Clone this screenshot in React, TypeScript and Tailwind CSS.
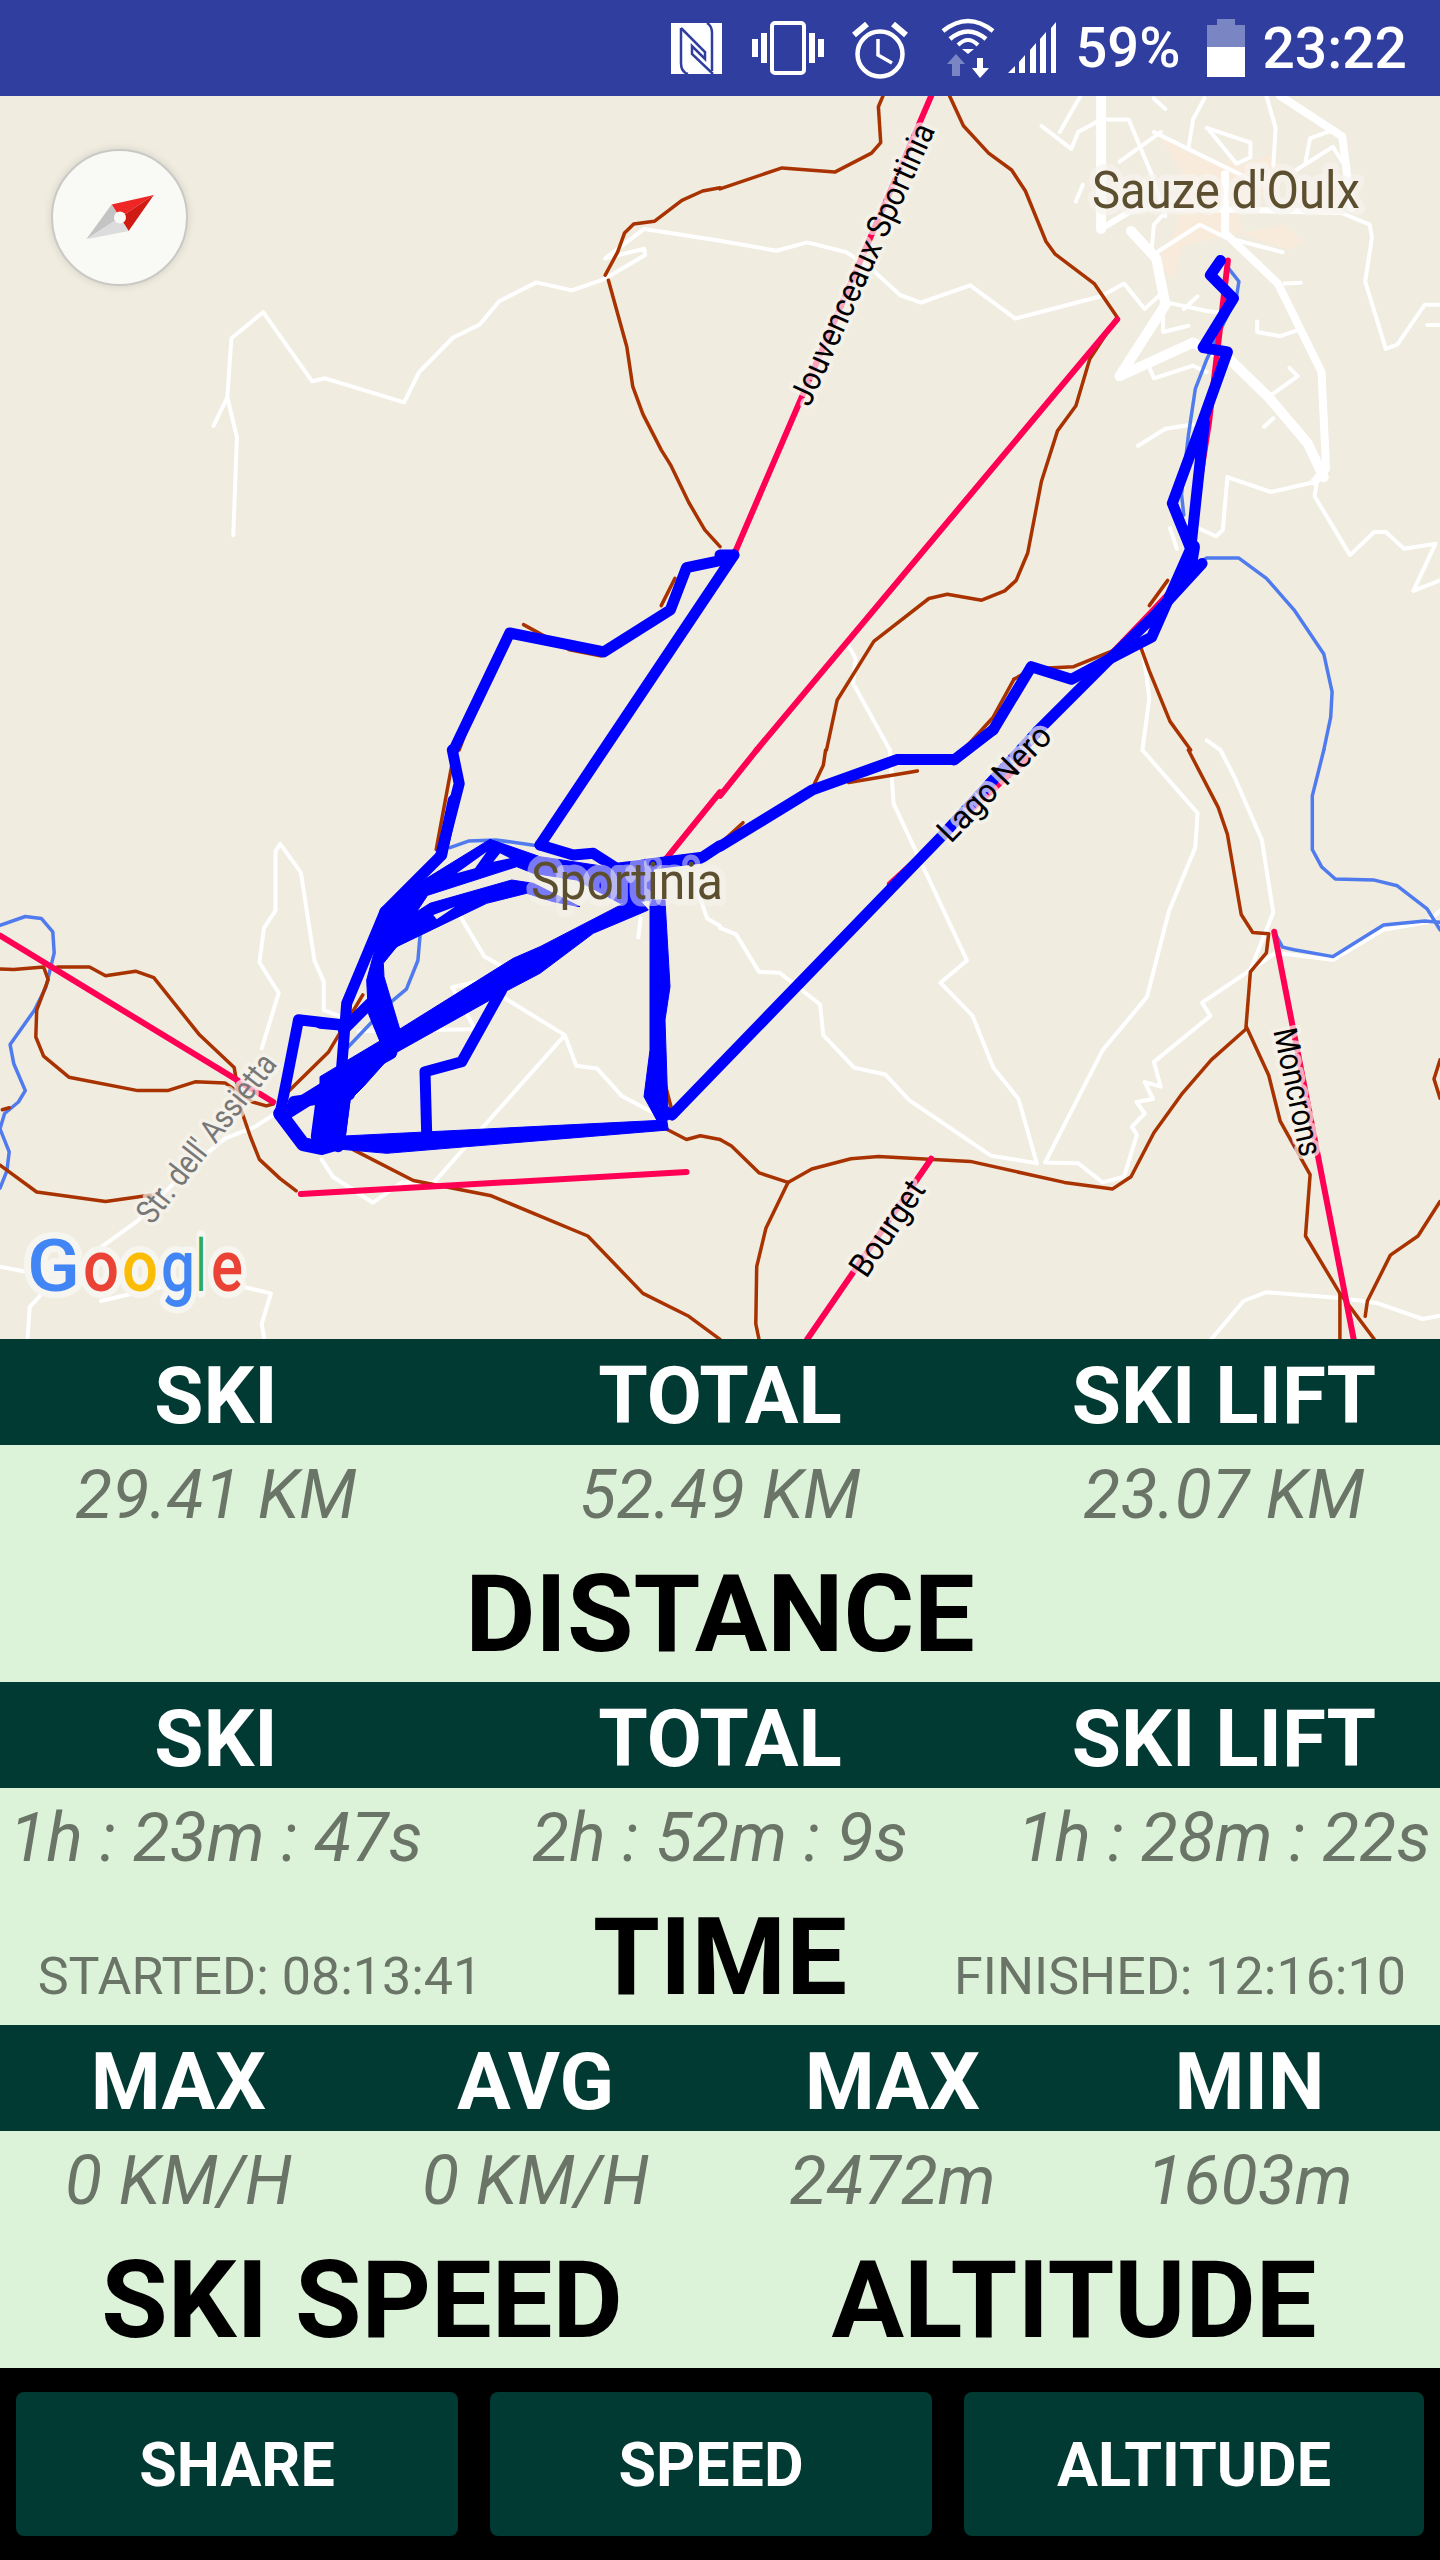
import React from "react";

type Zone = 2 | 3 | 4 | 5 | 6 | 9;
const Z: Record<Zone, [number, number, number, number]> = {
  2: [0, 90, 720 / 1568, 660 / 1568],
  3: [720, 90, 720 / 1568, 660 / 1568],
  4: [0, 750, 720 / 1568, 600 / 1568],
  5: [720, 750, 720 / 1568, 600 / 1568],
  6: [320, 800, 1 / 3, 1 / 3],
  9: [0, 0, 1, 1],
};
const pts = (z: Zone, s: string) => {
  const [ox, oy, sx, sy] = Z[z];
  return s
    .trim()
    .split(/\s+/)
    .map((p) => {
      const [x, y] = p.split(",").map(Number);
      return `${(ox + x * sx).toFixed(1)},${(oy + y * sy).toFixed(1)}`;
    })
    .join(" ");
};

type L = [Zone, string, number?];

const white: L[] = [
  [2, "508,1058 516,825 495,730 504,590 573,528 680,692 708,685 880,742 913,670 987,588 1045,557 1087,502 1168,457 1245,476 1315,450 1405,392 1403,377 1318,400 1403,330 1568,358"],
  [2, "495,730 465,798"],
  [3, "0,358 123,382 190,362 275,385 330,425 392,487 437,505 545,464 643,543 830,490 880,460 925,520 965,480"],
  [3, "830,14 830,330", 10],
  [3, "1220,14 1355,110 1375,280", 8],
  [3, "895,335 950,400 970,510 870,680 1030,600 1110,640 1195,730 1280,840 1315,920", 10],
  [3, "1100,200 1100,340 1215,460 1310,670 1320,900 1295,930", 8],
  [3, "830,330 890,290 930,280 1350,290", 6],
  [3, "700,85 765,140 780,100 830,70 890,70 940,200 970,300"],
  [3, "740,100 785,14"],
  [3, "1020,140 1030,70 1055,20"],
  [3, "1060,90 1155,125 1155,160 1125,175 1065,95"],
  [3, "1190,14 1210,90 1205,180"],
  [3, "1275,170 1285,115 1335,95"],
  [3, "1255,190 1335,135 1355,170"],
  [3, "945,100 1150,210"],
  [3, "945,390 1045,320 1100,350 1225,385"],
  [3, "940,380 945,320 970,290"],
  [3, "870,170 960,100"],
  [3, "945,20 970,45"],
  [3, "1350,290 1415,320 1420,350 1405,455 1450,615 1475,605 1535,510 1568,510"],
  [3, "1540,558 1568,558"],
  [3, "975,505 1060,525 1095,530"],
  [3, "1010,520 1040,490"],
  [3, "965,530 965,575 1020,560"],
  [3, "1170,550 1170,575 1220,585 1260,570"],
  [3, "935,660 945,685 1030,655 1060,670"],
  [3, "1240,660 1258,680 1200,725"],
  [3, "1185,800 1205,780"],
  [3, "910,845 970,805 1030,795"],
  [3, "980,1040 995,1090"],
  [3, "1105,920 1200,955 1300,930 1295,965 1372,1105 1425,1050 1450,1050 1490,1090 1558,1078 1510,1190 1568,1165"],
  [3, "1105,920 1095,1045 1080,1060 1020,1030"],
  [3, "1230,460 1265,458"],
  [3, "920,1568 935,1445 920,1320"],
  [3, "1060,1545 1090,1568"],
  [3, "280,1320 295,1350 290,1410 370,1568"],
  [3, "775,265 790,225"],
  [5, "370,0 378,140 538,550 480,608 550,695 595,830 650,912 690,1080"],
  [5, "920,0 1040,165 1035,255 978,420 930,645 833,785 708,1078 780,1080 833,1130 880,1115 908,1005 897,985 925,950 907,920 943,912 925,868 960,880 945,815 1068,695 1050,660 1155,575 1205,425 1180,235 1120,70 1090,0"],
  [5, "1155,575 1210,530 1335,548 1445,470 1540,450 1568,420"],
  [5, "0,465 35,482 85,580 130,582 218,665 225,745 292,830 360,848 412,915 590,1060 690,1080"],
  [5, "1070,1540 1140,1440 1190,1417 1350,1432 1430,1445 1530,1487 1568,1478"],
  [4, "750,700 705,680 705,605 685,550 655,320 610,245 600,265 600,420 575,465 565,555 607,635 570,780"],
  [4, "600,950 555,985 490,1015 415,1090"],
  [4, "380,1130 300,1230 185,1330"],
  [4, "0,1350 50,1362 110,1362"],
  [4, "700,1070 725,1115 812,1183 875,1130 945,1130 1230,745 1255,825 1300,832 1355,905 1450,965"],
  [4, "985,620 1040,605 1230,745"],
  [4, "985,620 1030,720 1030,730 780,735"],
  [4, "1000,430 1055,540 1130,590"],
  [4, "60,1535 65,1455 100,1410"],
  [4, "220,1440 360,1400"],
  [4, "520,1400 590,1420 570,1500 575,1535"],
  [4, "1395,440 1390,490"],
  [4, "1520,370 1540,440 1568,460"],
];

const brown: L[] = [
  [2, "1568,232 1530,240 1485,262 1425,312 1380,318 1360,340 1345,385 1318,440"],
  [2, "1325,452 1365,610 1378,705 1400,770 1440,855 1460,890 1500,980 1535,1045 1568,1085"],
  [2, "1140,1270 1240,1330 1310,1345"],
  [2, "1440,1225 1470,1160"],
  [2, "1000,1568 1030,1480"],
  [3, "0,235 135,185 250,195 330,150 350,125 345,40 355,14"],
  [3, "500,14 530,85 585,150 635,190 665,240 710,360 730,390 815,460 865,540 805,640 775,750 735,810 700,930 670,1100 645,1165 620,1190 570,1212 495,1198 455,1208 335,1310 255,1450 232,1568"],
  [3, "915,1320 935,1380 980,1500 1025,1568"],
  [3, "935,1225 975,1165"],
  [3, "640,1400 595,1490 530,1568"],
  [3, "640,1400 680,1375 770,1370 860,1330"],
  [5, "230,0 225,40 205,90"],
  [5, "280,85 430,55"],
  [5, "50,190 0,245"],
  [5, "0,1018 25,1035 85,1105 148,1130 200,1095 285,1068 345,1062 545,1075 750,1130 855,1147 895,1115 945,1000 1005,900 1070,810 1145,730 1155,580 1190,530 1195,480 1160,477 1135,430 1105,220 1085,150 1020,0"],
  [5, "148,1130 100,1250 80,1350 78,1500 85,1540"],
  [5, "1147,725 1195,850 1220,970 1285,1110 1275,1270 1350,1420 1350,1540"],
  [5, "1350,1420 1425,1540"],
  [5, "1405,1480 1410,1440 1460,1320 1520,1270 1568,1180"],
  [5, "1568,810 1555,860 1568,910"],
  [4, "0,572 30,574 95,567 105,600 80,680 78,750 95,800 150,855 300,890 365,890 425,867 490,870 550,920 580,930 595,925"],
  [4, "125,567 195,567 230,590 295,578 335,595 435,745 510,830 525,940 545,1010 565,1070 610,1120 645,1152"],
  [4, "0,1085 80,1155 230,1180 345,1160"],
  [4, "630,890 715,790 790,640"],
  [4, "950,260 990,0"],
  [4, "770,1045 900,1125 1070,1165 1280,1270 1400,1420 1500,1480 1568,1540"],
  [4, "1450,990 1495,1018 1525,1008 1568,1018"],
  [4, "5,940 20,935"],
  [4, "1450,880 1465,950"],
];

const river: L[] = [
  [3, "1105,420 1130,455 1125,490 1090,570 1060,640 1035,710 1020,820 1005,960 1010,1010"],
  [3, "1040,1125 1060,1112 1130,1112 1190,1160 1250,1235 1315,1340 1333,1430 1330,1490 1315,1568"],
  [5, "1315,0 1290,120 1290,260 1310,305 1340,337 1425,340 1475,355 1540,415 1568,470"],
  [5, "1568,450 1535,447 1445,457 1335,540 1250,522 1225,515 1207,475"],
  [4, "0,458 55,435 90,440 115,475 118,530 100,620 75,680 22,770 30,820 55,890 40,920 10,950 0,990 20,1050 15,1100 0,1145"],
  [4, "980,255 1020,238 1080,235 1170,250"],
  [4, "915,480 910,550 885,625 850,660 755,780"],
];

const pink: L[] = [
  [3, "460,14 30,1105"],
  [3, "865,545 80,1568"],
  [5, "80,0 0,120"],
  [4, "1568,110 1450,285"],
  [3, "1106,405 1065,790 1012,1155 940,1240 690,1525"],
  [5, "680,10 370,350"],
  [4, "0,485 595,920"],
  [4, "655,1160 1495,1103"],
  [5, "460,1068 190,1540"],
  [5, "1207,475 1380,1540"],
];

const track: L[] = [
  [3, "1090,405 1068,440 1118,495 1052,612 1105,622 1050,790 985,982 1025,1090 1055,790"],
  [3, "1025,1090 940,1300 860,1345 765,1400 678,1370 595,1520"],
  [9, "993.3,729.6 954,760"],
  [5, "510,25 385,25 200,105 0,252"],
  [9, "1037,732 942,836 672,1115 663,1110"],
  [3, "1050,1125 945,1250 855,1345 690,1525"],
  [3, "1030,1085 1020,1150", 14],
  [4, "1568,250 1530,280 1400,300"],
  [2, "988,1568 1110,1290 1315,1335 1460,1235 1495,1135 1568,1118"],
  [9, "734,555 540,845"],
  [3, "0,1105 30,1105"],
  [4, "985,0 1000,88 960,275"],
  [6, "400,0 365,165 195,335"],
  [6, "660,135 760,165 820,160 890,205 1140,175"],
  [6, "195,335 80,610 65,800 55,1040"],
  [6, "545,570 425,785 315,815 320,1000"],
  [6, "0,670 60,675"],
  [6, "70,690 150,610"],
  [4, "610,950 650,705 745,718"],
  [4, "610,950 660,1030 700,1040 730,1030", 14],
  [4, "640,920 760,900", 12],
  [4, "700,920 690,1010", 12],
  [4, "620,950 700,890 850,790", 14],
  [4, "750,900 735,1030", 14],
];

const trackFill: [Zone, string][] = [
  [6, "0,830 235,690 580,475 660,440 950,290 985,330 950,345 820,400 660,520 555,575 215,765 130,860 90,900 75,1020 0,1030"],
  [6, "990,300 1035,300 1050,560 1035,660 1045,960 1010,960 972,890 990,750"],
  [6, "30,1010 1040,960 1045,990 200,1060 30,1045"],
  [6, "195,335 320,235 320,290 280,350 300,390 230,440 190,490 192,530 240,690 180,725 145,640 140,540"],
  [6, "320,235 510,118 660,170 760,185 890,205 1000,190 1000,300 900,310 770,240 640,220 590,200 310,290"],
  [6, "330,310 575,240 640,250 780,320 700,305 620,280 500,310 230,440 200,470 190,400"],
];

const holes: string[] = ["410,220 500,155 465,205", "520,185 540,160 570,175", "340,345 405,320 350,358"];

const Lines = ({ data, color, w }: { data: L[]; color: string; w: number }) => (
  <>
    {data.map(([z, s, lw], i) => (
      <polyline key={i} points={pts(z, s)} fill="none" stroke={color} strokeWidth={lw ?? w} strokeLinejoin="round" strokeLinecap="round" />
    ))}
  </>
);

const Label = ({ x, y, r, len, size, children, color = "#000", halo = "#f6f4ee", hw = 8, op = 0.7 }: { x: number; y: number; r: number; len: number; size: number; children: string; color?: string; halo?: string; hw?: number; op?: number }) => (
  <text
    transform={`translate(${x} ${y}) rotate(${r})`}
    textAnchor="middle"
    dominantBaseline="central"
    fontSize={size}
    textLength={len}
    lengthAdjust="spacingAndGlyphs"
    fill={color}
    stroke={halo}
    strokeWidth={hw}
    strokeOpacity={op}
    strokeLinejoin="round"
    paintOrder="stroke"
    fontFamily="Roboto, sans-serif"
  >
    {children}
  </text>
);

const googleLetters: [string, string, number, number][] = [
  ["G", "#4285f4", 27, 53],
  ["o", "#ea4335", 83, 36],
  ["o", "#fbbc05", 122, 36],
  ["g", "#4285f4", 161, 34],
  ["l", "#34a853", 197, 8],
  ["e", "#ea4335", 211, 32],
];

const MapView = () => (
  <div className="relative h-[1243px] overflow-hidden bg-[#f0ece0]">
    <svg viewBox="0 96 1440 1243" width={1440} height={1243} className="block">
      <polygon fill="#f9ebdc" points={pts(3, "950,100 1020,150 1100,185 1110,155 1130,180 1195,155 1230,185 1210,240 1120,280 1140,340 1230,320 1270,360 1240,380 1130,340 1090,350 1010,370 985,450 950,400 990,340 1000,290 1010,200")} />
      <Lines data={white} color="#ffffff" w={4} />
      <Lines data={river} color="#4f7bee" w={3.5} />
      <Lines data={brown} color="#a83200" w={3.5} />
      <Lines data={pink} color="#ff0055" w={6} />
      <Lines data={track} color="#0000ff" w={11} />
      {trackFill.map(([z, s], i) => (
        <polygon key={i} points={pts(z, s)} fill="#0000ff" stroke="#0000ff" strokeWidth={1} strokeLinejoin="round" />
      ))}
      {holes.map((s, i) => (
        <polygon key={i} points={pts(6, s)} fill="#f0ece0" />
      ))}
      <Label x={862} y={264} r={-65.6} len={305} size={33}>Jouvenceaux Sportinia</Label>
      <Label x={994} y={783} r={-46} len={148} size={33}>Lago Nero</Label>
      <Label x={887} y={1228} r={-56} len={108} size={33}>Bourget</Label>
      <Label x={1298} y={1092} r={78} len={130} size={33}>Moncrons</Label>
      <Label x={206} y={1138} r={-52} len={205} size={33} color="#777777">Str. dell' Assietta</Label>
      <Label x={1226} y={190} r={0} len={268} size={52} color="#5c4f2f" hw={13}>Sauze d'Oulx</Label>
      <Label x={627} y={881} r={0} len={192} size={52} color="#5c4f2f" hw={14} op={0.5}>Sportinia</Label>
      <text y={1291} fontSize={72} fontWeight={500} stroke="#f6f5ef" strokeWidth={13} strokeLinejoin="round" paintOrder="stroke" fontFamily="Roboto, sans-serif">
        {googleLetters.map(([c, f, x, w], i) => (
          <tspan key={i} x={x} fill={f} textLength={w} lengthAdjust="spacingAndGlyphs">
            {c}
          </tspan>
        ))}
      </text>
    </svg>
    <div className="absolute left-[51px] top-[53px] flex h-[137px] w-[137px] items-center justify-center rounded-full border-2 border-[#c9c9c5] bg-[#f9f9f5] shadow-[0_0_8px_rgba(0,0,0,0.12)]">
      <svg viewBox="86 193 68 45" width={68} height={45}>
        <polygon points="111.6,202.4 153.8,193 120,215.4" fill="#ee2626" />
        <polygon points="153.8,193 128.6,229 120,215.4" fill="#d01a14" />
        <polygon points="111.6,202.4 86.3,237.3 120,215.4" fill="#c4c4c4" />
        <polygon points="86.3,237.3 128.6,229 120,215.4" fill="#dcdcdc" />
        <circle cx={120} cy={215.4} r={6} fill="#f9f9f5" />
      </svg>
    </div>
  </div>
);

const StatusBar = () => (
  <div className="flex h-[96px] items-center justify-end bg-[#303f9f] pr-[33px] text-[57px] font-medium leading-none text-white">
    <svg width={51} height={51} viewBox="0 0 51 51">
      <rect width={51} height={51} fill="#fff" />
      <g fill="none" stroke="#303f9f" strokeWidth={2.5}>
        <path d="M10 5V40Q10 49 17 51" />
        <path d="M10 5L34 29V36L21 23V31L42 51" />
        <path d="M36 0Q41 3 41 10V48" />
      </g>
    </svg>
    <svg className="ml-[30px]" width={72} height={54} viewBox="0 0 72 54" fill="#fff">
      <rect x={20} y={2} width={32} height={50} rx={3} fill="none" stroke="#fff" strokeWidth={4} />
      <rect x={9} y={12} width={6} height={30} />
      <rect x={0} y={18} width={6} height={18} />
      <rect x={57} y={12} width={6} height={30} />
      <rect x={66} y={18} width={6} height={18} />
    </svg>
    <svg className="ml-[26px]" width={60} height={61} viewBox="0 0 60 61" fill="none" stroke="#fff">
      <circle cx={30} cy={36} r={22.5} strokeWidth={4.5} />
      <path d="M4 17L17 6M43 6L56 17" strokeWidth={6} />
      <path d="M28 21V37L42 45" strokeWidth={3.5} />
    </svg>
    <svg className="ml-[30px]" width={56} height={61} viewBox="0 0 56 61">
      <g fill="none" stroke="#fff">
        <path d="M3 13Q28 -7 53 13" strokeWidth={4.5} />
        <path d="M10 21Q28 6 46 21" strokeWidth={4.5} />
        <path d="M18 27Q28 17 38 27" strokeWidth={4} />
      </g>
      <polygon points="22,31 34,31 28,36" fill="#fff" />
      <polygon points="7,46 16,36 25,46 20,46 20,58 12,58 12,46" fill="#7a85c4" />
      <polygon points="37,40 43,40 43,50 49,50 40,60 32,50 37,50" fill="#fff" />
    </svg>
    <svg className="ml-[11px]" width={50} height={52} viewBox="0 0 50 52" fill="#fff">
      <polygon points="1,51 8,44 8,51" />
      <polygon points="12,51 12,40 18,33 18,51" />
      <polygon points="23,51 23,28 29,21 29,51" />
      <polygon points="33,51 33,17 39,10 39,51" />
      <polygon points="44,51 44,6 49,0 49,51" />
    </svg>
    <span className="ml-[18px] text-[56px]">59%</span>
    <svg className="ml-[27px]" width={38} height={58} viewBox="0 0 38 58">
      <path d="M10 0H28V6H38V28H0V6H10Z" fill="#7a85c4" />
      <rect y={28} width={38} height={30} fill="#fff" />
    </svg>
    <span className="ml-[17px]">23:22</span>
  </div>
);

const Head = ({ items, cols }: { items: string[]; cols: string }) => (
  <div className={`grid h-[106px] items-center bg-[#013a33] pt-2 text-center text-[80px] font-bold leading-none text-white ${cols}`}>
    {items.map((t, i) => (
      <div key={i}>{t}</div>
    ))}
  </div>
);

const Values = ({ items, cols }: { items: string[]; cols: string }) => (
  <div className={`grid h-[98px] items-center pt-[2px] text-center text-[68px] italic leading-none text-[#6a7568] ${cols}`}>
    {items.map((t, i) => (
      <div key={i} className="whitespace-nowrap">{t}</div>
    ))}
  </div>
);

const COL3 = "grid-cols-[432px_576px_432px]";
const COL4 = "grid-cols-4 pr-3";

export default function App() {
  return (
    <div className="h-[2560px] w-[1440px] overflow-hidden bg-black [font-family:Roboto,sans-serif]">
      <StatusBar />
      <MapView />
      <Head items={["SKI", "TOTAL", "SKI LIFT"]} cols={COL3} />
      <div className="h-[237px] bg-[#dcf3da]">
        <Values items={["29.41 KM", "52.49 KM", "23.07 KM"]} cols={COL3} />
        <div className="flex h-[139px] items-center justify-center pt-[2px] text-[108px] font-bold leading-none text-black">DISTANCE</div>
      </div>
      <Head items={["SKI", "TOTAL", "SKI LIFT"]} cols={COL3} />
      <div className="h-[237px] bg-[#dcf3da]">
        <Values items={["1h : 23m : 47s", "2h : 52m : 9s", "1h : 28m : 22s"]} cols={COL3} />
        <div className="grid h-[139px] grid-cols-[520px_400px_520px] items-center pt-[2px] text-center">
          <div className="mt-[41px] text-[52px] leading-none text-[#6a7568]">STARTED: 08:13:41</div>
          <div className="text-[108px] font-bold leading-none text-black">TIME</div>
          <div className="mt-[41px] text-[52px] leading-none text-[#6a7568]">FINISHED: 12:16:10</div>
        </div>
      </div>
      <Head items={["MAX", "AVG", "MAX", "MIN"]} cols={COL4} />
      <div className="h-[237px] bg-[#dcf3da]">
        <Values items={["0 KM/H", "0 KM/H", "2472m", "1603m"]} cols={COL4} />
        <div className="grid h-[139px] grid-cols-[724px_1fr] items-center pr-4 pt-[2px] text-center text-[108px] font-bold leading-none text-black">
          <div>SKI SPEED</div>
          <div>ALTITUDE</div>
        </div>
      </div>
      <div className="grid grid-cols-[442px_442px_460px] gap-x-8 px-4 pt-6">
        {["SHARE", "SPEED", "ALTITUDE"].map((t) => (
          <div key={t} className="flex h-[144px] items-center justify-center rounded-lg bg-[#013a33] pt-[2px] text-[61px] font-bold leading-none text-white">
            {t}
          </div>
        ))}
      </div>
    </div>
  );
}
